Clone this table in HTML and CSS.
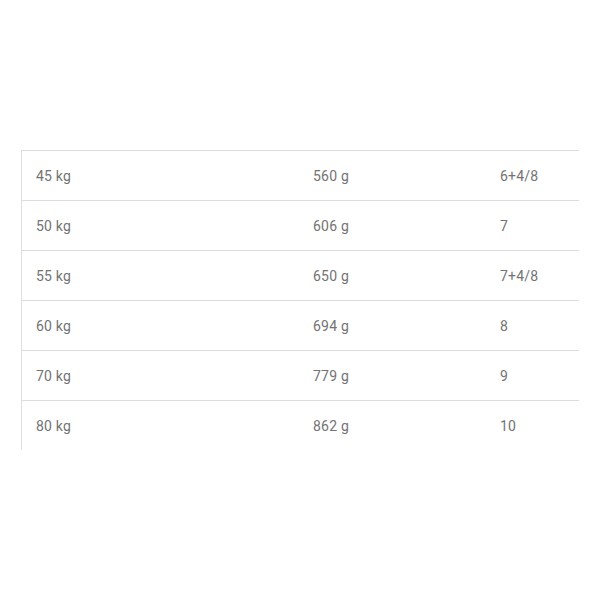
FILE: index.html
```html
<!DOCTYPE html>
<html>
<head>
<meta charset="utf-8">
<link rel="stylesheet" href="styles.css">
</head>
<body>
<div class="page">
  <div class="table">
    <div class="row"><span>45 kg</span><span>560 g</span><span>6+4/8</span></div>
    <div class="row"><span>50 kg</span><span>606 g</span><span>7</span></div>
    <div class="row"><span>55 kg</span><span>650 g</span><span>7+4/8</span></div>
    <div class="row"><span>60 kg</span><span>694 g</span><span>8</span></div>
    <div class="row"><span>70 kg</span><span>779 g</span><span>9</span></div>
    <div class="row"><span>80 kg</span><span>862 g</span><span>10</span></div>
  </div>
</div>
</body>
</html>
```
FILE: styles.css
```css
html, body { margin: 0; padding: 0; background: #fff; }
.page { padding: 150px 0 0 21px; }
.table {
  width: 558px;
  border-left: 1px solid #e0e0e0;
  box-sizing: border-box;
}
.row {
  display: grid;
  grid-template-columns: 277px 187px 93px;
  height: 50px;
  box-sizing: border-box;
  border-top: 1px solid #dcdcdc;
  align-items: center;
  font-family: Roboto, "Liberation Sans", sans-serif;
  font-size: 14px;
  letter-spacing: 0.2px;
  color: #737373;
}
.row span { padding-left: 14px; }
```
